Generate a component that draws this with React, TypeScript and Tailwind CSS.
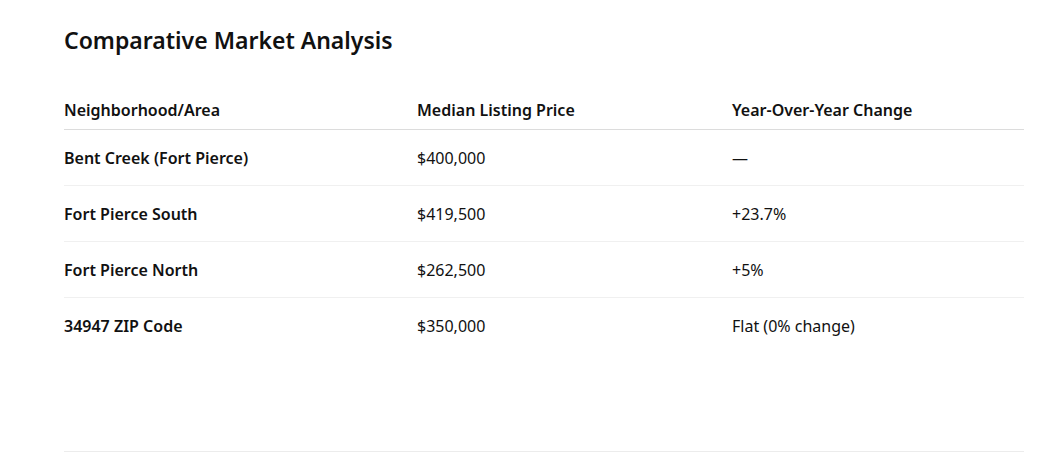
import React from "react";

const rows = [
  ["Bent Creek (Fort Pierce)", "$400,000", "—"],
  ["Fort Pierce South", "$419,500", "+23.7%"],
  ["Fort Pierce North", "$262,500", "+5%"],
  ["34947 ZIP Code", "$350,000", "Flat (0% change)"],
];

export default function App() {
  return (
    <div className="min-h-[468px] bg-white text-[#111] pl-16 pr-[18px] pt-6" style={{ fontFamily: '"Noto Sans", sans-serif' }}>
      <h1 className="text-[23px] leading-8 font-semibold">Comparative Market Analysis</h1>
      <table className="w-full mt-[33px] border-collapse text-[16px]">
        <thead>
          <tr className="border-b border-[#dcdcdc]">
            <th className="w-[353px] text-left font-semibold pt-[9px] pb-[7px] leading-6">Neighborhood/Area</th>
            <th className="w-[315px] text-left font-semibold pt-[9px] pb-[7px] leading-6">Median Listing Price</th>
            <th className="text-left font-semibold pt-[9px] pb-[7px] leading-6">Year-Over-Year Change</th>
          </tr>
        </thead>
        <tbody>
          {rows.map((r, i) => (
            <tr key={i} className={i < rows.length - 1 ? "border-b border-[#f0f0f0]" : ""}>
              <td className="pt-4 pb-[15px] leading-6 font-semibold">{r[0]}</td>
              <td className="pt-4 pb-[15px] leading-6">{r[1]}</td>
              <td className="pt-4 pb-[15px] leading-6">{r[2]}</td>
            </tr>
          ))}
        </tbody>
      </table>
      <div className="mt-[98px] h-px bg-[#ececec]" />
    </div>
  );
}
